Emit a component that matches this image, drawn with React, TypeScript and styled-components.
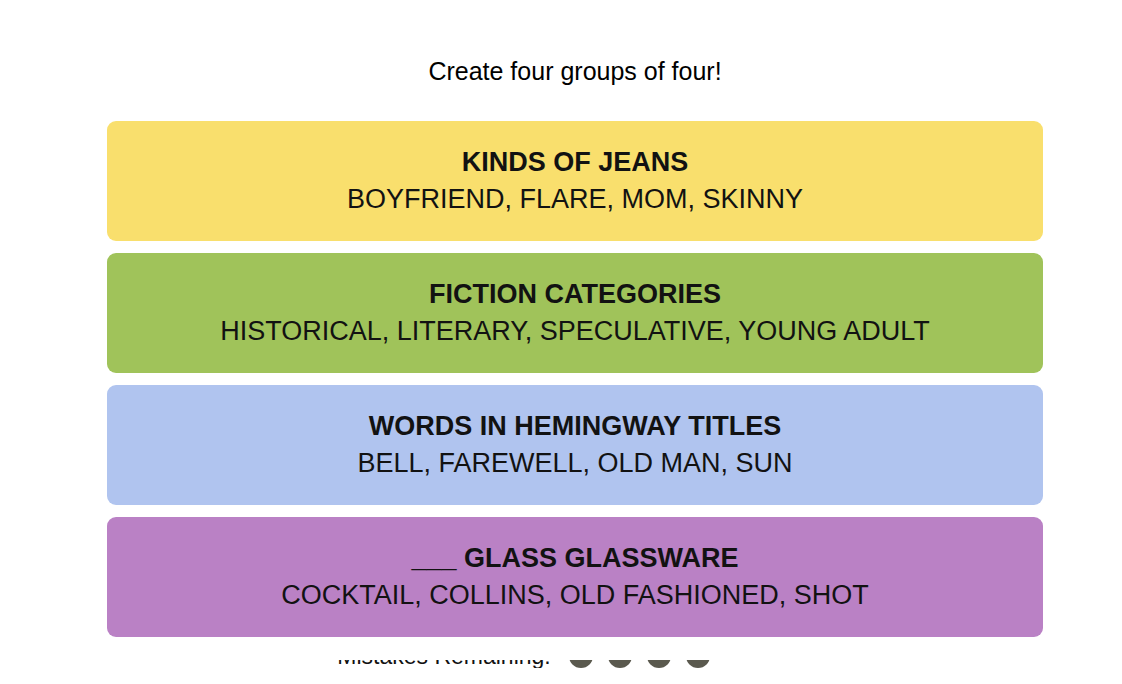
import * as React from 'react';
import styled, { createGlobalStyle } from 'styled-components';

const GlobalStyle = createGlobalStyle`
    html, body {
        margin: 0;
        padding: 0;
        background: #ffffff;
    }

    body {
        font-family: "Liberation Sans", Arial, sans-serif;
        color: #121212;
    }
`;

const StyledPage = styled.main`
    display: flex;
    flex-direction: column;
    align-items: center;
    padding-left: 28px;
`;

const StyledPrompt = styled.h1`
    margin: 56px 0 35px;
    font-size: 25px;
    line-height: 30px;
    font-weight: 400;
    color: #000000;
`;

const StyledBoard = styled.section`
    position: relative;
    z-index: 1;
    width: 936px;
    display: flex;
    flex-direction: column;
    gap: 12px;
    padding-bottom: 23px;
    background: #ffffff;
`;

const StyledGroup = styled.div<{ $color: string }>`
    height: 120px;
    border-radius: 9px;
    background-color: ${(p) => p.$color};
    display: flex;
    flex-direction: column;
    justify-content: center;
    align-items: center;
    text-transform: uppercase;
    font-size: 27px;
    line-height: 35px;
    color: #121212;
`;

const StyledGroupTitle = styled.strong`
    font-weight: 700;
`;

const StyledGroupMembers = styled.span`
    margin-top: 2px;
    font-weight: 400;
`;

const StyledMistakes = styled.div`
    margin-top: -16px;
    display: flex;
    align-items: center;
    gap: 18px;
    padding-right: 103px;
    font-size: 23px;
    line-height: 24px;
    color: #121212;
`;

const StyledDots = styled.div`
    display: flex;
    gap: 15px;
`;

const StyledDot = styled.span`
    width: 24px;
    height: 24px;
    border-radius: 50%;
    background-color: #5a594e;
`;

const groups = [
    { title: 'Kinds of Jeans', members: 'Boyfriend, Flare, Mom, Skinny', color: '#f9df6d' },
    { title: 'Fiction Categories', members: 'Historical, Literary, Speculative, Young Adult', color: '#a0c35a' },
    { title: 'Words in Hemingway Titles', members: 'Bell, Farewell, Old Man, Sun', color: '#b0c4ef' },
    { title: '___ Glass Glassware', members: 'Cocktail, Collins, Old Fashioned, Shot', color: '#ba81c5' },
];

export default function App() {
    return (
        <>
            <GlobalStyle />
            <StyledPage>
                <StyledPrompt>Create four groups of four!</StyledPrompt>
                <StyledBoard>
                    {groups.map((g) => (
                        <StyledGroup key={g.title} $color={g.color}>
                            <StyledGroupTitle>{g.title}</StyledGroupTitle>
                            <StyledGroupMembers>{g.members}</StyledGroupMembers>
                        </StyledGroup>
                    ))}
                </StyledBoard>
                <StyledMistakes>
                    <span>Mistakes Remaining:</span>
                    <StyledDots>
                        {[0, 1, 2, 3].map((i) => (
                            <StyledDot key={i} />
                        ))}
                    </StyledDots>
                </StyledMistakes>
            </StyledPage>
        </>
    );
}
